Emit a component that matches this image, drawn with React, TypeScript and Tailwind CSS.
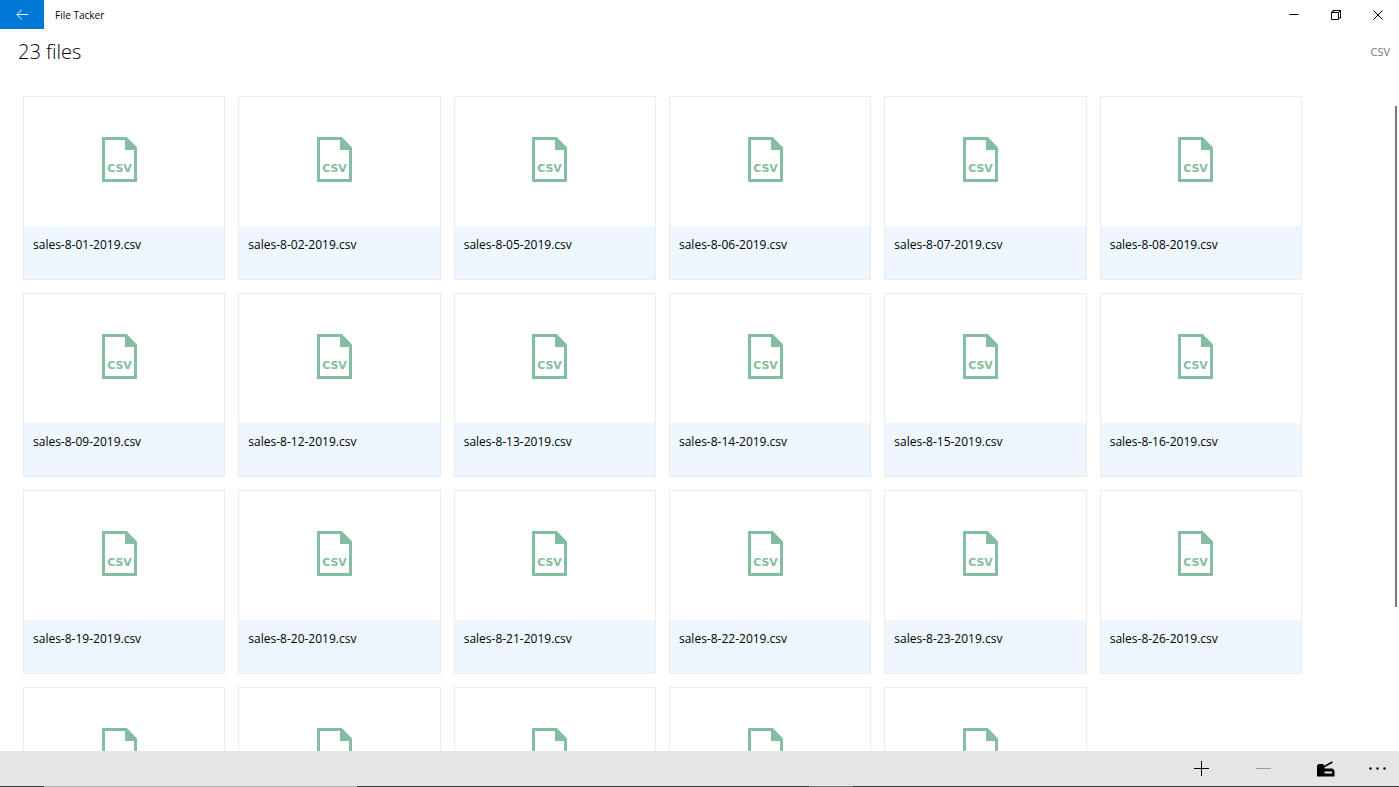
import { useState } from 'react';

const DAYS = [
  '01', '02', '05', '06', '07', '08',
  '09', '12', '13', '14', '15', '16',
  '19', '20', '21', '22', '23', '26',
  '27', '28', '29', '30', '31',
];

const FILES = DAYS.map((day) => `sales-8-${day}-2019.csv`);

export default function App() {
  const [selected, setSelected] = useState<string | null>(null);

  return (
    <div className="flex h-screen flex-col overflow-hidden bg-white font-['Open_Sans','Noto_Sans',sans-serif] text-black">
      <TitleBar />

      <header className="flex h-[67px] shrink-0 items-start justify-between pl-[18px] pr-[9px]">
        <h1 className="mt-[7px] text-[20px] leading-8 font-light">{FILES.length} files</h1>
        <span className="mt-[15px] text-[11px] leading-4 text-[#767676]">CSV</span>
      </header>

      <main className="flex min-h-0 flex-1 items-start overflow-hidden pl-[23px]">
        <ul className="mr-[93px] grid flex-1 grid-cols-6 gap-[13px]">
          {FILES.map((name) => (
            <li key={name}>
              <FileCard name={name} onSelect={() => setSelected(name)} />
            </li>
          ))}
        </ul>
        <div className="mt-2.5 mr-0.5 h-[501px] w-0.5 bg-[#7a7a7a]" />
      </main>

      <CommandBar canRemove={selected !== null} />
      <TaskbarEdge />
    </div>
  );
}

function TitleBar() {
  return (
    <div className="flex h-[29px] shrink-0 items-center">
      <button aria-label="Back" className="flex h-full w-11 items-center justify-center bg-[#0078d7]">
        <svg width="12" height="11" viewBox="0 0 12 11" fill="none" stroke="white">
          <path d="M12 5.5H1M5.5 .8L.8 5.5l4.7 4.7" />
        </svg>
      </button>
      <span className="ml-[11px] flex-1 text-[10px] leading-4">File Tacker</span>
      <button aria-label="Minimize" className="flex h-full w-[42px] items-center justify-center">
        <svg width="10" height="10" viewBox="0 0 10 10" stroke="black">
          <path d="M.5 4.5h9" />
        </svg>
      </button>
      <button aria-label="Restore" className="flex h-full w-[42px] items-center justify-center">
        <svg width="10" height="10" viewBox="0 0 10 10" fill="none" stroke="black">
          <path d="M.5 2.5h7v7h-7zM2 2V.5h7.5V8H8M.5 2.5l1.5-2M7.5 2.5l2-2" />
        </svg>
      </button>
      <button aria-label="Close" className="flex h-full w-[42px] items-center justify-center">
        <svg width="10" height="10" viewBox="0 0 10 10" stroke="black">
          <path d="M.5 .5l9 9M9.5 .5l-9 9" />
        </svg>
      </button>
    </div>
  );
}

function FileCard({ name, onSelect }: { name: string; onSelect: () => void }) {
  return (
    <button onClick={onSelect} className="flex h-[184px] w-full flex-col border border-[#ececec] text-left">
      <span className="flex h-[129px] w-full items-center justify-center pr-2.5 pb-1">
        <CsvIcon />
      </span>
      <span className="w-full flex-1 bg-[#eef7ff] px-[9px] pt-[11px] text-[12px] leading-4">{name}</span>
    </button>
  );
}

function CsvIcon() {
  return (
    <svg width="35" height="45" viewBox="0 0 35 45" aria-hidden="true">
      <path d="M1.5 1.5h22.5l9.5 10v32h-32z" fill="none" stroke="#84bda0" strokeWidth="3" />
      <path d="M23 0h1.5L35 10.5V13H23z" fill="#84bda0" />
      <text
        x="17.5"
        y="35"
        textAnchor="middle"
        fill="#84bda0"
        className="font-['DejaVu_Sans',sans-serif] text-[11px] font-bold"
      >
        CSV
      </text>
    </svg>
  );
}

function CommandBar({ canRemove }: { canRemove: boolean }) {
  return (
    <div className="flex h-[35px] shrink-0 items-center justify-end bg-[#e5e5e5]">
      <button aria-label="Add" className="flex h-full w-14 items-center justify-center">
        <svg width="15" height="15" viewBox="0 0 15 15" stroke="black">
          <path d="M7.5 0v15M0 7.5h15" />
        </svg>
      </button>
      <button
        aria-label="Remove"
        disabled={!canRemove}
        className="flex h-full w-[68px] items-center justify-center disabled:text-[#999999]"
      >
        <svg width="15" height="15" viewBox="0 0 15 15" stroke="currentColor">
          <path d="M0 7.5h15" />
        </svg>
      </button>
      <button aria-label="Staple" className="flex h-full w-[58px] items-center justify-center">
        <svg width="18" height="16" viewBox="0 0 18 16">
          <path
            d="M1.5 3H6.2L7.5 5.5V7.5H15.5L17.5 9.5V15.5H0V4.5zM7.5 10.5v2H15v-2z"
            fillRule="evenodd"
          />
          <path d="M6.5 6L15.5 1" fill="none" stroke="black" strokeWidth="1.6" />
        </svg>
      </button>
      <button aria-label="More" className="flex h-full w-11 items-center justify-center">
        <svg width="17" height="3" viewBox="0 0 17 3">
          <circle cx="1.5" cy="1.5" r="1.2" />
          <circle cx="8.5" cy="1.5" r="1.2" />
          <circle cx="15.5" cy="1.5" r="1.2" />
        </svg>
      </button>
    </div>
  );
}

// the top edge of the system taskbar
function TaskbarEdge() {
  return (
    <div className="flex h-px shrink-0 bg-[#3c3c3c]">
      <div className="w-11" />
      <div className="w-[313px] bg-[#b4b4b4]" />
      <div className="w-[452px]" />
      <div className="w-11 bg-[#777777]" />
    </div>
  );
}
